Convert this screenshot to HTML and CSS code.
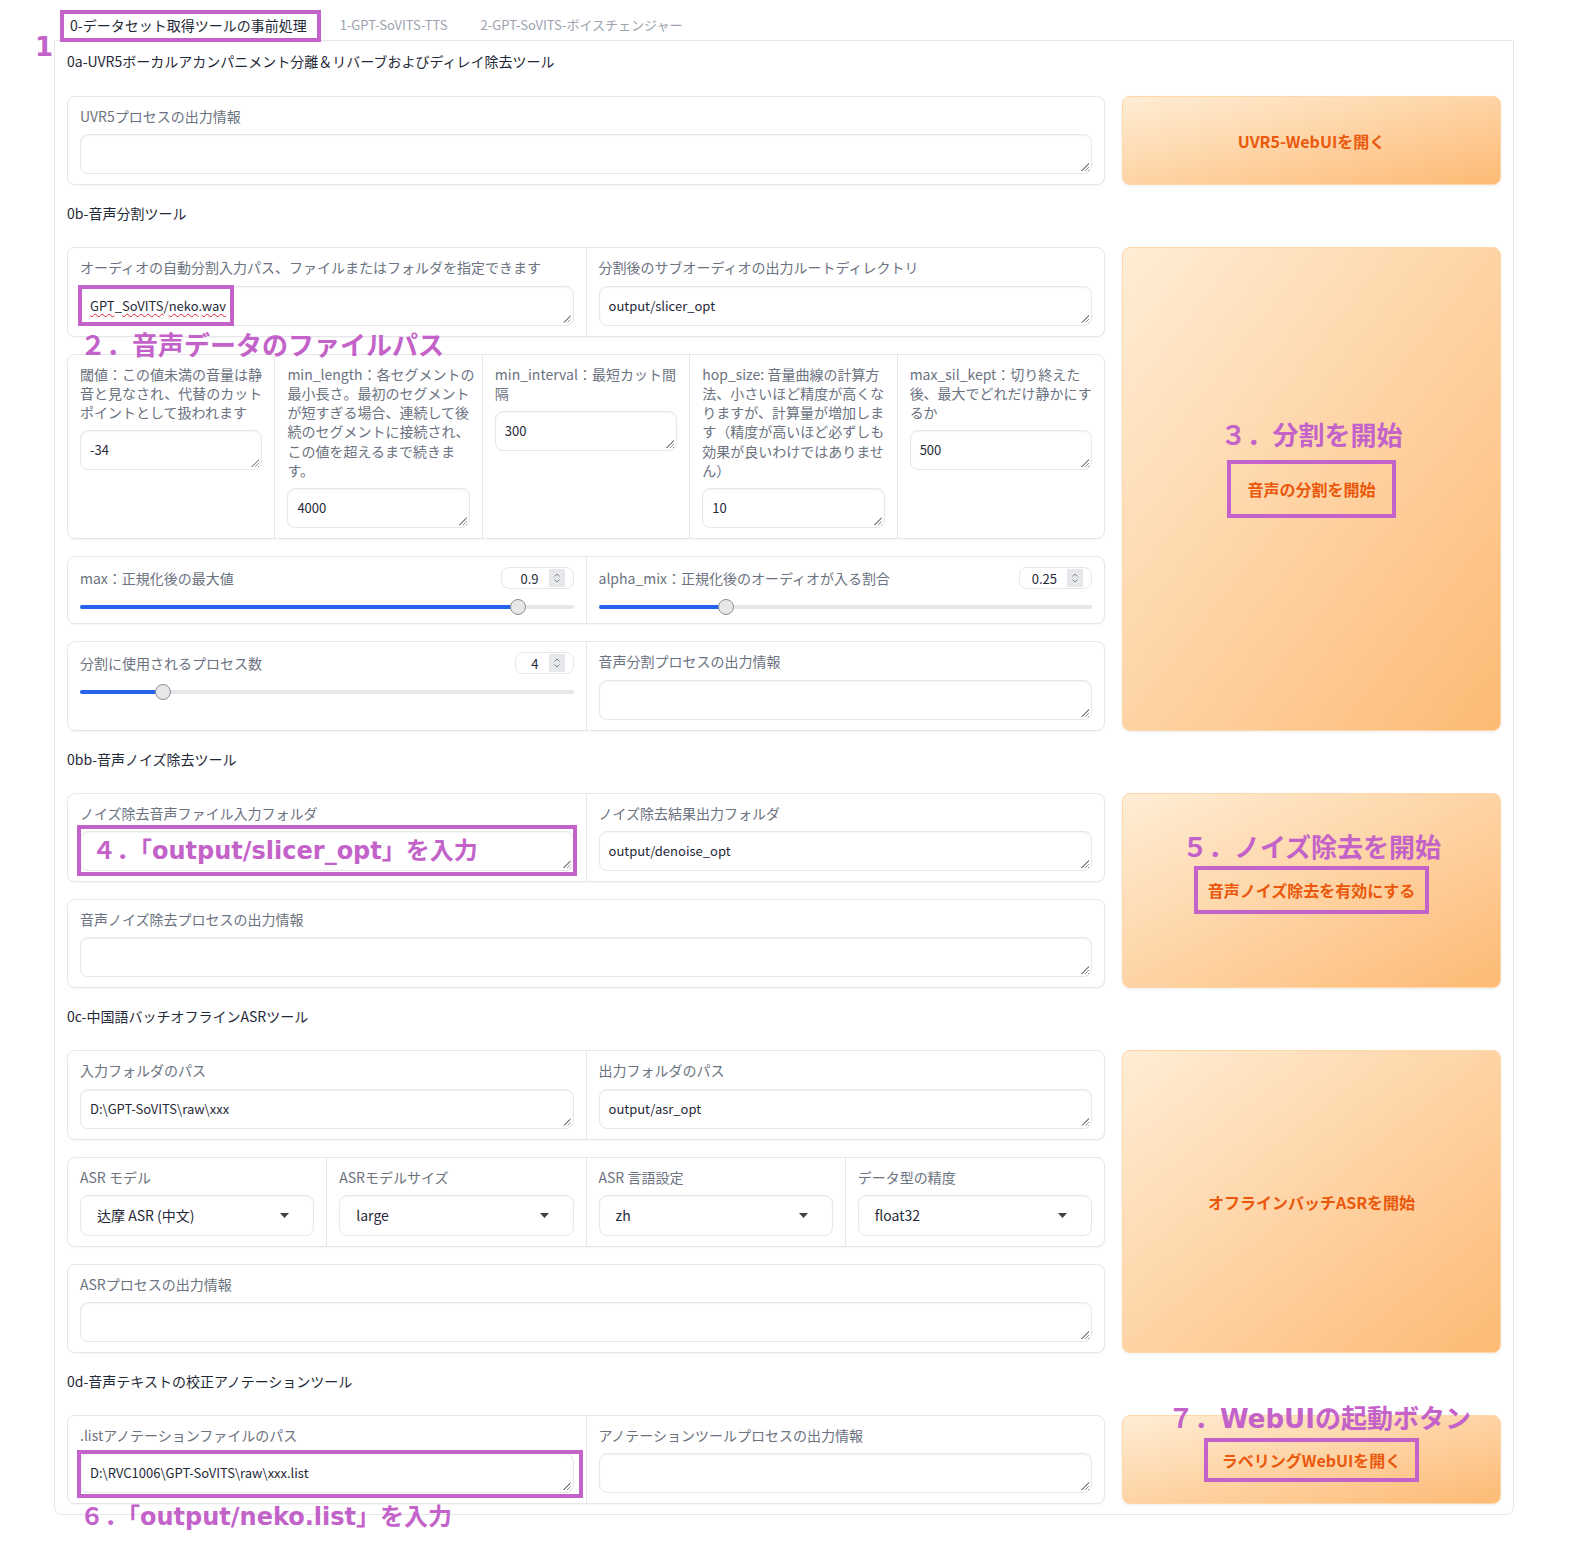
FILE: index.html
```html
<!DOCTYPE html>
<html lang="ja">
<head>
<meta charset="utf-8">
<title>GPT-SoVITS WebUI</title>
<link rel="stylesheet" href="styles.css">
</head>
<body>
<div class="page">
  <nav class="tabs">
    <div class="tab active">
      <span class="anno anno-one">1</span>0-データセット取得ツールの事前処理<span class="anno-rect rect-tab"></span>
    </div>
    <div class="tab">1-GPT-SoVITS-TTS</div>
    <div class="tab">2-GPT-SoVITS-ボイスチェンジャー</div>
  </nav>

  <main class="panel">
    <h2 class="sec first">0a-UVR5ボーカルアカンパニメント分離＆リバーブおよびディレイ除去ツール</h2>
    <section class="row">
      <div class="col">
        <div class="block">
          <div class="cell">
            <span class="lbl">UVR5プロセスの出力情報</span>
            <div class="textbox"></div>
          </div>
        </div>
      </div>
      <button class="btn">UVR5-WebUIを開く</button>
    </section>

    <h2 class="sec">0b-音声分割ツール</h2>
    <section class="row">
      <div class="col">
        <div class="block">
          <div class="cell">
            <span class="lbl">オーディオの自動分割入力パス、ファイルまたはフォルダを指定できます</span>
            <div class="textbox"><span class="sp">GPT</span>_<span class="sp">SoVITS</span>/<span class="sp">neko</span>.<span class="sp">wav</span><span class="anno-rect rect-path"></span><span class="anno anno-2">２．音声データのファイルパス</span></div>
          </div>
          <div class="cell">
            <span class="lbl">分割後のサブオーディオの出力ルートディレクトリ</span>
            <div class="textbox">output/slicer_opt</div>
          </div>
        </div>

        <div class="block">
          <div class="cell">
            <span class="lbl">閾値：この値未満の音量は静<br>音と見なされ、代替のカット<br>ポイントとして扱われます</span>
            <div class="textbox">-34</div>
          </div>
          <div class="cell">
            <span class="lbl">min_length：各セグメントの<br>最小長さ。最初のセグメント<br>が短すぎる場合、連続して後<br>続のセグメントに接続され、<br>この値を超えるまで続きま<br>す。</span>
            <div class="textbox">4000</div>
          </div>
          <div class="cell">
            <span class="lbl">min_interval：最短カット間<br>隔</span>
            <div class="textbox">300</div>
          </div>
          <div class="cell">
            <span class="lbl">hop_size: 音量曲線の計算方<br>法、小さいほど精度が高くな<br>りますが、計算量が増加しま<br>す（精度が高いほど必ずしも<br>効果が良いわけではありませ<br>ん）</span>
            <div class="textbox">10</div>
          </div>
          <div class="cell">
            <span class="lbl">max_sil_kept：切り終えた<br>後、最大でどれだけ静かにす<br>るか</span>
            <div class="textbox">500</div>
          </div>
        </div>

        <div class="block">
          <div class="cell slider-cell">
            <div class="num-head">
              <span class="lbl">max：正規化後の最大値</span>
              <span class="num w73">0.9<span class="spin"><svg width="8" height="12" viewBox="0 0 8 12"><path d="M1.5 4.5L4 2l2.5 2.5M1.5 7.5L4 10l2.5-2.5" fill="none" stroke="#7d818a" stroke-width="1"/></svg></span></span>
            </div>
            <div class="slider" style="--v:0.9"><div class="track"><div class="fill"></div></div><div class="thumb"></div></div>
          </div>
          <div class="cell slider-cell">
            <div class="num-head">
              <span class="lbl">alpha_mix：正規化後のオーディオが入る割合</span>
              <span class="num w73">0.25<span class="spin"><svg width="8" height="12" viewBox="0 0 8 12"><path d="M1.5 4.5L4 2l2.5 2.5M1.5 7.5L4 10l2.5-2.5" fill="none" stroke="#7d818a" stroke-width="1"/></svg></span></span>
            </div>
            <div class="slider" style="--v:0.25"><div class="track"><div class="fill"></div></div><div class="thumb"></div></div>
          </div>
        </div>

        <div class="block">
          <div class="cell">
            <div class="num-head">
              <span class="lbl">分割に使用されるプロセス数</span>
              <span class="num w59">4<span class="spin"><svg width="8" height="12" viewBox="0 0 8 12"><path d="M1.5 4.5L4 2l2.5 2.5M1.5 7.5L4 10l2.5-2.5" fill="none" stroke="#7d818a" stroke-width="1"/></svg></span></span>
            </div>
            <div class="slider" style="--v:0.158"><div class="track"><div class="fill"></div></div><div class="thumb"></div></div>
          </div>
          <div class="cell">
            <span class="lbl">音声分割プロセスの出力情報</span>
            <div class="textbox"></div>
          </div>
        </div>
      </div>
      <button class="btn"><span class="boxed b3">音声の分割を開始<span class="anno above a3">３．分割を開始</span></span></button>
    </section>

    <h2 class="sec">0bb-音声ノイズ除去ツール</h2>
    <section class="row">
      <div class="col">
        <div class="block">
          <div class="cell">
            <span class="lbl">ノイズ除去音声ファイル入力フォルダ</span>
            <div class="textbox"><span class="anno-rect rect-4"></span><span class="anno anno-4">４．「output/slicer_opt」を入力</span></div>
          </div>
          <div class="cell">
            <span class="lbl">ノイズ除去結果出力フォルダ</span>
            <div class="textbox">output/denoise_opt</div>
          </div>
        </div>
        <div class="block">
          <div class="cell">
            <span class="lbl">音声ノイズ除去プロセスの出力情報</span>
            <div class="textbox"></div>
          </div>
        </div>
      </div>
      <button class="btn"><span class="boxed b5">音声ノイズ除去を有効にする<span class="anno above a5">５．ノイズ除去を開始</span></span></button>
    </section>

    <h2 class="sec">0c-中国語バッチオフラインASRツール</h2>
    <section class="row">
      <div class="col">
        <div class="block">
          <div class="cell">
            <span class="lbl">入力フォルダのパス</span>
            <div class="textbox">D:\GPT-SoVITS\raw\xxx</div>
          </div>
          <div class="cell">
            <span class="lbl">出力フォルダのパス</span>
            <div class="textbox">output/asr_opt</div>
          </div>
        </div>
        <div class="block">
          <div class="cell">
            <span class="lbl">ASR モデル</span>
            <div class="dropdown"><span>达摩 ASR (中文)</span><svg width="9" height="5" viewBox="0 0 9 5"><path d="M0 0H9L4.5 5Z" fill="#3f3f46"/></svg></div>
          </div>
          <div class="cell">
            <span class="lbl">ASRモデルサイズ</span>
            <div class="dropdown"><span>large</span><svg width="9" height="5" viewBox="0 0 9 5"><path d="M0 0H9L4.5 5Z" fill="#3f3f46"/></svg></div>
          </div>
          <div class="cell">
            <span class="lbl">ASR 言語設定</span>
            <div class="dropdown"><span>zh</span><svg width="9" height="5" viewBox="0 0 9 5"><path d="M0 0H9L4.5 5Z" fill="#3f3f46"/></svg></div>
          </div>
          <div class="cell">
            <span class="lbl">データ型の精度</span>
            <div class="dropdown"><span>float32</span><svg width="9" height="5" viewBox="0 0 9 5"><path d="M0 0H9L4.5 5Z" fill="#3f3f46"/></svg></div>
          </div>
        </div>
        <div class="block">
          <div class="cell">
            <span class="lbl">ASRプロセスの出力情報</span>
            <div class="textbox"></div>
          </div>
        </div>
      </div>
      <button class="btn">オフラインバッチASRを開始</button>
    </section>

    <h2 class="sec">0d-音声テキストの校正アノテーションツール</h2>
    <section class="row">
      <div class="col">
        <div class="block">
          <div class="cell">
            <span class="lbl">.listアノテーションファイルのパス</span>
            <div class="textbox">D:\RVC1006\GPT-SoVITS\raw\xxx.list<span class="anno-rect rect-6"></span></div>
          </div>
          <div class="cell">
            <span class="lbl">アノテーションツールプロセスの出力情報</span>
            <div class="textbox"></div>
          </div>
        </div>
      </div>
      <button class="btn"><span class="boxed b7">ラベリングWebUIを開く<span class="anno above a7">７．WebUIの起動ボタン</span></span></button>
    </section>
  </main>
  <div class="after-panel"><span class="anno anno-6">６．「output/neko.list」を入力</span></div>
</div>
</body>
</html>
```

FILE: styles.css
```css
* { box-sizing: border-box; }

html, body { background: #ffffff; }

body {
  margin: 0;
  font-family: "Noto Sans CJK JP", "Noto Sans", sans-serif;
  color: #1f2937;
}

.page {
  width: 1460px;
  margin-left: 54px;
  padding-top: 10px;
}

/* tabs */
.tabs {
  display: flex;
  gap: 33px;
  padding-left: 16px;
  height: 30px;
}
.tab {
  position: relative;
  font-size: 13px;
  line-height: 30px;
  color: #9ca3af;
  white-space: nowrap;
}
.tab.active {
  font-size: 14px;
  color: #1f2937;
}

/* panel */
.panel {
  border: 1px solid #e5e7eb;
  border-radius: 0 0 8px 8px;
  padding: 10px 12px;
}
.sec {
  margin: 18px 0 24px;
  font-size: 14px;
  line-height: 20px;
  font-weight: 400;
  color: #1f2937;
}
.sec.first { margin-top: 0; margin-bottom: 25px; }

.row {
  display: grid;
  grid-template-columns: minmax(0, 1fr) 379px;
  column-gap: 17px;
}
.col {
  display: flex;
  flex-direction: column;
  gap: 17px;
  min-width: 0;
}

.block {
  display: flex;
  border: 1px solid #e5e7eb;
  border-radius: 8px;
  background: #ffffff;
  box-shadow: 0 1px 2px rgba(0, 0, 0, 0.04);
}
.cell {
  flex: 1 1 0;
  min-width: 0;
  padding: 10px 12px;
}
.cell + .cell { border-left: 1px solid #e5e7eb; }
.slider-cell { padding-bottom: 8px; }

.lbl {
  display: block;
  font-size: 14px;
  line-height: 19.3px;
  color: #6b7280;
  margin-bottom: 8px;
  white-space: nowrap;
}

/* text boxes */
.textbox {
  position: relative;
  height: 40px;
  border: 1px solid #e5e7eb;
  border-radius: 8px;
  padding: 9px 9px;
  font-size: 13px;
  line-height: 20px;
  color: #1f2937;
  background: #ffffff;
  box-shadow: inset 0 1px 2px rgba(0, 0, 0, 0.05);
  white-space: nowrap;
}
.textbox::after {
  content: "";
  position: absolute;
  right: 2px;
  bottom: 2px;
  width: 9px;
  height: 9px;
  background: repeating-linear-gradient(135deg, transparent 0 1.6px, #8f8f8f 1.6px 2.6px);
  clip-path: polygon(100% 0, 100% 100%, 0 100%);
}
.sp {
  text-decoration: underline wavy #e0242b;
  text-decoration-thickness: 1px;
  text-underline-offset: 2px;
}

/* number + slider */
.num-head {
  display: flex;
  align-items: center;
  justify-content: space-between;
  height: 22px;
}
.num-head .lbl { margin-bottom: 0; }
.num {
  display: flex;
  align-items: center;
  justify-content: flex-end;
  gap: 10px;
  height: 22px;
  padding-right: 8px;
  border: 1px solid #e5e7eb;
  border-radius: 8px;
  font-size: 13px;
  color: #1f2937;
}
.w73 { width: 73px; }
.w59 { width: 59px; }
.spin {
  display: flex;
  align-items: center;
  justify-content: center;
  width: 16px;
  height: 18px;
  background: #e5e7eb;
}

.slider {
  position: relative;
  display: flex;
  align-items: center;
  height: 16px;
  margin-top: 10px;
}
.track {
  flex: 1;
  height: 4px;
  border-radius: 2px;
  background: #e5e7eb;
  overflow: hidden;
}
.fill {
  height: 100%;
  width: calc(var(--v) * (100% - 16px) + 8px);
  background: #2563eb;
}
.thumb {
  position: absolute;
  top: 0;
  left: calc(var(--v) * (100% - 16px));
  width: 16px;
  height: 16px;
  border-radius: 50%;
  background: #e7e7e9;
  border: 1px solid #8e8e93;
}

/* dropdown */
.dropdown {
  display: flex;
  align-items: center;
  justify-content: space-between;
  height: 41px;
  padding: 0 24px 0 16px;
  border: 1px solid #e5e7eb;
  border-radius: 8px;
  font-size: 14px;
  color: #1f2937;
  box-shadow: inset 0 1px 2px rgba(0, 0, 0, 0.04);
}

/* buttons */
.btn {
  display: flex;
  align-items: center;
  justify-content: center;
  padding: 0;
  border: 1px solid #fed7aa;
  border-radius: 8px;
  background: linear-gradient(to bottom right, #ffedd5, #fdba74);
  color: #ea580c;
  font-family: "Noto Sans CJK JP", "Noto Sans", sans-serif;
  font-size: 16px;
  font-weight: 700;
  line-height: 22px;
  box-shadow: 0 1px 3px rgba(0, 0, 0, 0.08);
}

/* below-panel area carrying the last annotation */
.after-panel {
  position: relative;
  height: 41px;
}

/* annotations */
.anno {
  position: absolute;
  font-family: "DejaVu Sans", "Noto Sans CJK JP", sans-serif;
  font-weight: 700;
  color: #c362c9;
  line-height: 1;
  white-space: nowrap;
  pointer-events: none;
}
.anno-rect {
  position: absolute;
  border: 4px solid #c362c9;
  pointer-events: none;
}
.boxed {
  position: relative;
  border: 4px solid #c362c9;
  line-height: 22px;
}
.b3 { padding: 14px 16px; }
.b5 { padding: 9px 10px; }
.b7 { padding: 7px 14px; }

.above {
  left: 50%;
  transform: translateX(-50%);
  font-size: 26px;
}
.a3 { bottom: calc(100% + 15px); }
.a5 { bottom: calc(100% + 9px); }
.a7 { bottom: calc(100% + 10px); margin-left: 8px; }

.anno-one {
  left: -35px;
  top: 24px;
  font-size: 26px;
}
.rect-tab { left: -10px; right: -14px; top: 0; bottom: -2px; }

.rect-path { left: -3px; top: -2px; width: 156px; height: 41px; }
.anno-2 { left: -1px; top: 46px; font-size: 26px; }

.rect-4 { left: -4px; right: -4px; top: -7px; bottom: -6px; }
.anno-4 { left: 11px; top: 50%; transform: translateY(-50%); font-size: 24px; }

.rect-6 { left: -4px; right: -10px; top: -4px; bottom: -6px; }
.anno-6 { left: 26px; top: -10px; font-size: 24px; }
```
